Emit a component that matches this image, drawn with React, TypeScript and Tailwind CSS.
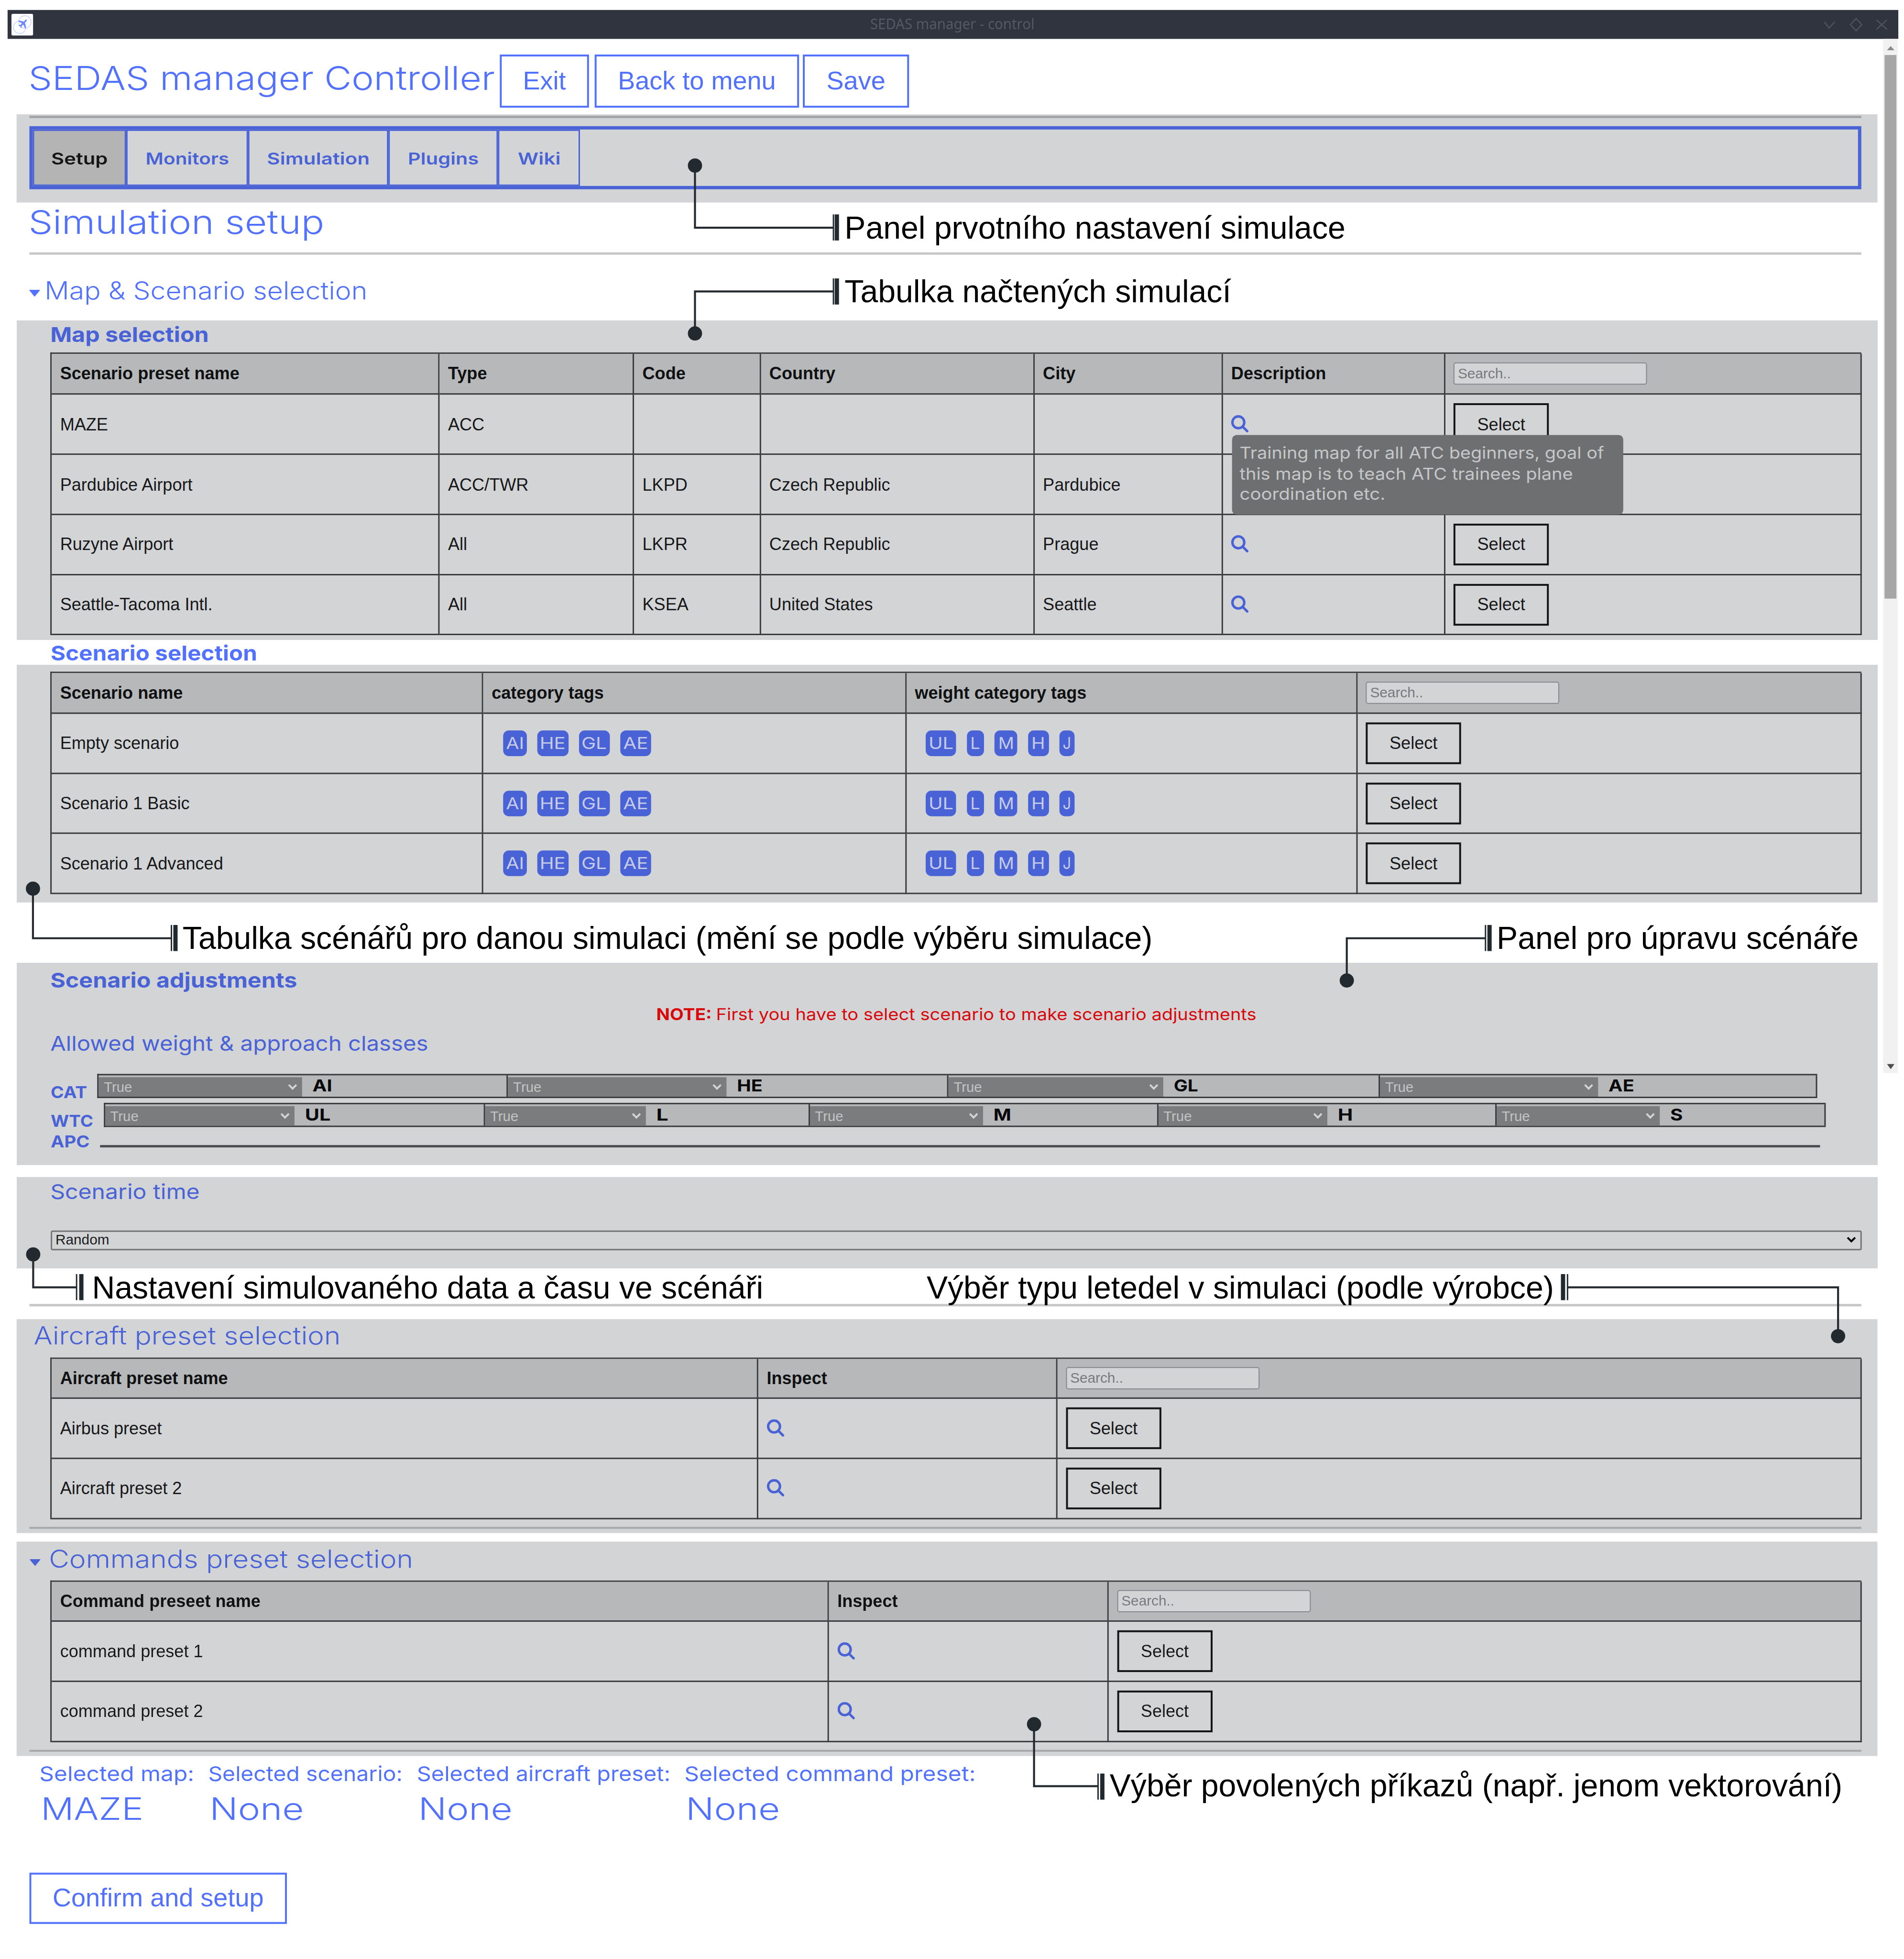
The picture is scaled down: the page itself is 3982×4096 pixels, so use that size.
import { useLayoutEffect, useRef, useState } from "react";
import type { ReactNode } from "react";

/** Text stretched horizontally so that it fills exactly `w` pixels. */
function Fit({ w, className = "", children }: { w: number; className?: string; children: ReactNode }) {
  const ref = useRef<HTMLSpanElement>(null);
  const [k, setK] = useState(1);
  useLayoutEffect(() => {
    const measure = () => {
      if (ref.current && ref.current.offsetWidth > 0) setK(w / ref.current.offsetWidth);
    };
    measure();
    document.fonts.ready.then(measure);
  }, [w]);
  return (
    <span className={`block shrink-0 whitespace-nowrap ${className}`} style={{ width: w }}>
      <span ref={ref} className="inline-block origin-left" style={{ transform: `scaleX(${k})` }}>
        {children}
      </span>
    </span>
  );
}

const h72 = "font-['Inter',sans-serif] text-[69.3px] leading-[72px] font-[350]";
const h67 = "font-['Inter',sans-serif] text-[65px] leading-[67px] font-[350]";
const h54 = "font-['Inter',sans-serif] text-[52px] leading-[54px] font-[350]";
const h45 = "font-['Inter',sans-serif] text-[43.3px] leading-[45px]";
const h36 = "font-['Inter',sans-serif] text-[34.7px] leading-[36px]";
const tip = "font-['Inter',sans-serif] text-[34.7px] leading-[43.5px]";

function OutlineButton({ className, children }: { className: string; children: ReactNode }) {
  return (
    <button
      className={`flex shrink-0 items-center justify-center border-[4px] border-[#5271ff] text-[54.5px] leading-[62px] text-[#5271ff] ${className}`}
    >
      {children}
    </button>
  );
}

function SelectButton() {
  return (
    <button className="h-[88px] w-[201px] border-[4px] border-[#141516] text-[36.4px] leading-[41px] text-[#17181a]">
      Select
    </button>
  );
}

function SearchBox() {
  return (
    <div className="flex h-[47px] w-[408px] items-center rounded-[5px] border-2 border-[#85878a] bg-[#d3d4d6] pl-[7px] text-[30px] font-normal leading-[34px] text-[#78797c]">
      Search..
    </div>
  );
}

function Magnifier() {
  return (
    <svg viewBox="0 0 37 37" className="mb-[2px] size-[37px]" fill="none" stroke="#4962d6" strokeWidth="5.2">
      <circle cx="15.3" cy="15.3" r="12.5" />
      <path d="M24.300 24.300l9.700 9.700" strokeLinecap="round" />
    </svg>
  );
}

function Caret({ className }: { className: string }) {
  return (
    <svg viewBox="0 0 24 16" className={`h-[16px] w-[24px] ${className}`}>
      <path d="M2 1h20L12 13z" fill="currentColor" stroke="currentColor" strokeWidth="2" strokeLinejoin="round" />
    </svg>
  );
}

function Chevron({ className }: { className: string }) {
  return (
    <svg viewBox="0 0 20 14" className={`h-[14px] w-[20px] ${className}`} fill="none" stroke="currentColor" strokeWidth="4">
      <path d="M2 2l8 8 8-8" />
    </svg>
  );
}

function Rule({ className }: { className: string }) {
  return <div className={`ml-[62px] w-[3863px] ${className}`} />;
}

function Panel({ className, children }: { className: string; children: ReactNode }) {
  return <section className={`relative ml-[34.5px] w-[3924px] bg-[#d3d4d6] ${className}`}>{children}</section>;
}

type TableProps = { cols: string; head: ReactNode[]; headHeight: string; rows: ReactNode[][] };

function DataTable({ cols, head, headHeight, rows }: TableProps) {
  return (
    <div className="ml-[71.7px] w-[3819px] border-l-3 border-t-3 border-[#3a3b3d] text-[36.4px] leading-[41px] text-[#17181a]">
      <div className={`grid ${cols} ${headHeight}`}>
        {head.map((cell, i) => (
          <div
            key={i}
            className="flex items-center border-b-3 border-r-3 border-[#3a3b3d] bg-[#b7b8ba] pl-[17.5px] font-bold text-[#101112]"
          >
            {cell}
          </div>
        ))}
      </div>
      {rows.map((row, r) => (
        <div key={r} className={`grid h-[126.75px] ${cols}`}>
          {row.map((cell, i) => (
            <div key={i} className="flex items-center border-b-3 border-r-3 border-[#3a3b3d] pl-[17.5px]">
              {cell}
            </div>
          ))}
        </div>
      ))}
    </div>
  );
}

function Tag({ className, text, w }: { className: string; text: string; w: number }) {
  return (
    <span className={`flex h-[54px] items-center justify-center rounded-[12px] bg-[#4962d6] text-[#c5cbe6] ${className}`}>
      <Fit w={w} className={`mb-[2px] ${h36}`}>{text}</Fit>
    </span>
  );
}

function CategoryTags() {
  return (
    <div className="flex gap-[22px] pl-[24px]">
      <Tag className="w-[50px]" text="AI" w={38} />
      <Tag className="w-[66px]" text="HE" w={55} />
      <Tag className="w-[65px]" text="GL" w={54} />
      <Tag className="w-[65px]" text="AE" w={53} />
    </div>
  );
}

function WeightTags() {
  return (
    <div className="flex gap-[22.5px] pl-[23px]">
      <Tag className="w-[64px]" text="UL" w={52} />
      <Tag className="w-[36px]" text="L" w={21} />
      <Tag className="w-[48px]" text="M" w={33} />
      <Tag className="w-[44px]" text="H" w={29} />
      <Tag className="w-[32px]" text="J" w={18} />
    </div>
  );
}

function Tab({ label, w, className, active = false }: { label: string; w: number; className: string; active?: boolean }) {
  return (
    <div
      className={`flex items-center justify-center border-[3px] border-[#4962d6] pt-[4px] font-semibold ${
        active ? "bg-[#b5b4b5] text-[#151515]" : "text-[#4962d6]"
      } ${className}`}
    >
      <Fit w={w} className={h36}>{label}</Fit>
    </div>
  );
}

function ClassCell({ label, w, select, className }: { label: string; w: number; select: string; className: string }) {
  return (
    <div className={`flex h-full border-r-3 border-[#3a3b3d] ${className}`}>
      <div className={`mt-[4px] flex items-center justify-between bg-[#7b7c7e] pl-[11px] pr-[10px] text-[29.5px] leading-[34px] text-[#c3c4c5] ${select}`}>
        True
        <Chevron className="text-[#d3d4d6]" />
      </div>
      <Fit w={w} className={`ml-[22px] mt-[3px] font-bold text-[#08090a] ${h36}`}>{label}</Fit>
    </div>
  );
}

function TitleBar() {
  return (
    <div className="ml-[15.5px] mt-[21px] flex h-[61px] w-[3987px] items-center bg-[#30343f]">
      <svg viewBox="0 0 46 46" className="ml-[8.5px] size-[46px]" fill="none">
        <rect width="46" height="46" rx="4" fill="#fdfdff" />
        <circle cx="17.5" cy="28.5" r="13.2" stroke="#d3dbff" strokeWidth="2" />
        <circle cx="28.5" cy="17.5" r="13.2" stroke="#d3dbff" strokeWidth="2" />
        <path
          d="M32 12.5c1.400 1.200.4 2.600-.8 3.800l-2.700 2.700 2.300 11-1.800 1-4-8.200-3.600 3.400.3 3-1.400 1.300-1.700-4-4-1.700 1.300-1.400 3 .3 3.300-3.500-7.700-4.400 1.200-1.600 10.300 2.400 2.700-2.700c1.200-1.200 2.200-2.200 3.300-1.400z"
          fill="#6f88ff"
        />
      </svg>
      <Fit w={346} className="ml-[1765px] mb-[3px] font-['Noto_Sans',sans-serif] text-[31px] leading-[36px] text-[#555965]">
        SEDAS manager - control
      </Fit>
      <svg viewBox="0 0 140 32" className="ml-[1664px] h-[32px] w-[140px]" fill="none" stroke="#4f535f" strokeWidth="2.500">
        <path d="M2 10l10 13 12-13" />
        <path d="M69 3l12 13-12 13-12-13z" />
        <path d="M112 6l22 20M134 6l-22 20" />
      </svg>
    </div>
  );
}

function ScrollBar() {
  return (
    <div className="absolute left-[3971px] top-[82px] flex h-[2180px] w-[31px] flex-col items-center bg-[#f1f1f1]">
      <svg viewBox="0 0 16 9" className="mt-[15px] h-[9px] w-[16px]">
        <path d="M8 0l8 9H0z" fill="#8a8a8a" />
      </svg>
      <div className="mt-[10px] h-[1146px] w-[25px] bg-[#a6a6a6]" />
      <svg viewBox="0 0 16 11" className="mb-[8px] mt-auto h-[11px] w-[16px]">
        <path d="M0 0h16L8 11z" fill="#4d4d4d" />
      </svg>
    </div>
  );
}

const leaders = [
  { dot: [1465.5, 349], path: "M1465.500 349V480H1757", thin: 1757.5, thick: 1764.7, y: 452, h: 55 },
  { dot: [1465.5, 703], path: "M1465.500 703V614.500H1757", thin: 1757.5, thick: 1764.7, y: 587, h: 55 },
  { dot: [69.5, 1873.5], path: "M69.500 1873.500V1978H362", thin: 361.5, thick: 370, y: 1950, h: 55 },
  { dot: [2840, 2067], path: "M2840 2067V1978H3133", thin: 3132.5, thick: 3141, y: 1950, h: 55 },
  { dot: [70, 2644.5], path: "M70 2644.500V2714H161", thin: 161.5, thick: 171.5, y: 2686, h: 55 },
  { dot: [3876, 2817], path: "M3876 2817V2714H3305", thin: 3305.5, thick: 3296, y: 2686, h: 55 },
  { dot: [2180.5, 3635], path: "M2180.500 3635V3765.500H2316", thin: 2315.5, thick: 2324.5, y: 3739, h: 55 },
];

const notes = [
  { text: "Panel prvotního nastavení simulace", place: "left-[1781px] top-[447px]" },
  { text: "Tabulka načtených simulací", place: "left-[1781px] top-[581px]" },
  { text: "Tabulka scénářů pro danou simulaci (mění se podle výběru simulace)", place: "left-[385px] top-[1944px]" },
  { text: "Panel pro úpravu scénáře", place: "left-[3156px] top-[1944px]" },
  { text: "Nastavení simulovaného data a času ve scénáři", place: "left-[194px] top-[2681px]" },
  { text: "Výběr typu letedel v simulaci (podle výrobce)", place: "left-[1954px] top-[2681px]" },
  { text: "Výběr povolených příkazů (např. jenom vektorování)", place: "left-[2340px] top-[3731px]" },
];

function Annotations() {
  return (
    <>
      <svg viewBox="0 0 4015 4130" className="absolute left-0 top-0 h-[4130px] w-[4015px]" fill="none" stroke="#232a2f">
        {leaders.map((l, i) => (
          <g key={i}>
            <circle cx={l.dot[0]} cy={l.dot[1]} r="15" fill="#232a2f" stroke="none" />
            <path d={l.path} strokeWidth="4.200" />
            <path d={`M${l.thin} ${l.y}v${l.h}`} strokeWidth="3" />
            <path d={`M${l.thick} ${l.y}v${l.h}`} strokeWidth="9" />
          </g>
        ))}
      </svg>
      {notes.map((n) => (
        <div key={n.text} className={`absolute whitespace-nowrap text-[66.67px] leading-[66px] text-black ${n.place}`}>
          {n.text}
        </div>
      ))}
    </>
  );
}

function Selection({ label, w, value, vw, className }: { label: string; w: number; value: string; vw: number; className: string }) {
  return (
    <div className={`shrink-0 ${className}`}>
      <Fit w={w} className={h45}>{label}</Fit>
      <Fit w={vw} className={`ml-[3px] mt-[18px] ${h67}`}>{value}</Fit>
    </div>
  );
}

export default function App() {
  return (
    <div className="h-[4096px] w-[3982px] overflow-hidden bg-white">
      <div className="relative flex h-[4130px] w-[4015px] origin-top-left scale-[0.99178] flex-col font-['Liberation_Sans',Arial,sans-serif] *:shrink-0">
        <TitleBar />

        <header className="flex h-[159px] items-start pl-[60px] text-[#5271ff]">
          <Fit w={984} className={`mt-[47px] ${h72}`}>SEDAS manager Controller</Fit>
          <OutlineButton className="ml-[10px] mt-[33px] h-[112px] w-[188px]">Exit</OutlineButton>
          <OutlineButton className="ml-[12px] mt-[33px] h-[112px] w-[431px]">Back to menu</OutlineButton>
          <OutlineButton className="ml-[8px] mt-[33px] h-[112px] w-[224px]">Save</OutlineButton>
        </header>

        <Panel className="h-[186px]">
          <div className="ml-[27.5px] w-[3863px] pt-[3px]">
            <div className="h-[5px] bg-[#a3a4a6]" />
            <nav className="mt-[16.5px] flex h-[133.5px] border-[7px] border-[#4962d6]">
              <Tab active label="Setup" w={119} className="w-[197px]" />
              <Tab label="Monitors" w={176} className="w-[257px]" />
              <Tab label="Simulation" w={217} className="w-[296px]" />
              <Tab label="Plugins" w={150} className="w-[231px]" />
              <Tab label="Wiki" w={90} className="w-[173px]" />
            </nav>
          </div>
        </Panel>

        <div className="h-[248.5px] text-[#5271ff]">
          <Fit w={624} className={`ml-[60px] mt-[5px] ${h72}`}>Simulation setup</Fit>
          <Rule className="mt-[28px] h-[5px] bg-[#c6c6c7]" />
          <div className="mt-[49px] flex items-start pl-[61px]">
            <Caret className="mt-[25px]" />
            <Fit w={681} className={`ml-[9px] ${h54}`}>Map &amp; Scenario selection</Fit>
          </div>
        </div>

        <Panel className="h-[673px]">
          <Fit w={334} className={`ml-[71px] pt-[7px] font-bold text-[#4962d6] ${h45}`}>Map selection</Fit>
          <div className="mt-[15.5px]">
            <DataTable
              cols="grid-cols-[818px_410px_267.5px_577px_397px_469px_878px]"
              headHeight="h-[86.4px]"
              head={["Scenario preset name", "Type", "Code", "Country", "City", "Description", <SearchBox />]}
              rows={[
                ["MAZE", "ACC", "", "", "", <Magnifier />, <SelectButton />],
                ["Pardubice Airport", "ACC/TWR", "LKPD", "Czech Republic", "Pardubice", "", ""],
                ["Ruzyne Airport", "All", "LKPR", "Czech Republic", "Prague", <Magnifier />, <SelectButton />],
                ["Seattle-Tacoma Intl.", "All", "KSEA", "United States", "Seattle", <Magnifier />, <SelectButton />],
              ]}
            />
          </div>
          <div className="absolute left-[2563px] top-[241px] h-[168px] w-[825px] rounded-[10px] bg-[#6d6f71] pl-[16px] pt-[16.5px] text-[#c6c7c8]">
            <Fit w={769} className={tip}>Training map for all ATC beginners, goal of</Fit>
            <Fit w={703} className={tip}>this map is to teach ATC trainees plane</Fit>
            <Fit w={307} className={tip}>coordination etc.</Fit>
          </div>
        </Panel>

        <div className="h-[53px]">
          <Fit w={435} className={`ml-[106.5px] mt-[5px] font-bold text-[#5271ff] ${h45}`}>Scenario selection</Fit>
        </div>

        <Panel className="h-[501px] pt-[14px]">
          <DataTable
            cols="grid-cols-[910px_892.5px_951px_1063px]"
            headHeight="h-[86.4px]"
            head={["Scenario name", "category tags", "weight category tags", <SearchBox />]}
            rows={[
              ["Empty scenario", <CategoryTags />, <WeightTags />, <SelectButton />],
              ["Scenario 1 Basic", <CategoryTags />, <WeightTags />, <SelectButton />],
              ["Scenario 1 Advanced", <CategoryTags />, <WeightTags />, <SelectButton />],
            ]}
          />
        </Panel>

        <Panel className="mt-[127.5px] h-[425.5px] pt-[14px] text-[#4962d6]">
          <Fit w={520} className={`ml-[71px] font-bold ${h45}`}>Scenario adjustments</Fit>
          <div className="ml-[1349px] mt-[31px] flex text-[#d8090d]">
            <Fit w={117} className={`font-bold ${h36}`}>NOTE:</Fit>
            <Fit w={1139} className={`ml-[9px] ${h36}`}>First you have to select scenario to make scenario adjustments</Fit>
          </div>
          <Fit w={797} className={`ml-[71px] mt-[21px] ${h45}`}>Allowed weight &amp; approach classes</Fit>
          <div className="ml-[72px] mt-[42px] flex h-[51px]">
            <Fit w={77} className={`mt-[20px] font-bold ${h36}`}>CAT</Fit>
            <div className="ml-[21.500px] flex h-[51px] w-[3627px] border-y-3 border-l-3 border-[#3a3b3d] bg-[#b7b8ba]">
              <ClassCell label="AI" w={42} select="w-[429px]" className="w-[863px]" />
              <ClassCell label="HE" w={54} select="w-[461px]" className="w-[929px]" />
              <ClassCell label="GL" w={52} select="w-[453px]" className="w-[910px]" />
              <ClassCell label="AE" w={54} select="w-[460px]" className="w-[922px]" />
            </div>
          </div>
          <div className="ml-[72px] mt-[10px] flex h-[51px]">
            <Fit w={90} className={`mt-[20px] font-bold ${h36}`}>WTC</Fit>
            <div className="ml-[22px] flex h-[51px] w-[3631px] border-y-3 border-l-3 border-[#3a3b3d] bg-[#b7b8ba]">
              <ClassCell label="UL" w={54} select="w-[399px]" className="w-[801px]" />
              <ClassCell label="L" w={26} select="w-[339px]" className="w-[685px]" />
              <ClassCell label="M" w={37} select="w-[365px]" className="w-[735px]" />
              <ClassCell label="H" w={32} select="w-[356px]" className="w-[713px]" />
              <ClassCell label="S" w={27} select="w-[344px]" className="w-[694px]" />
            </div>
          </div>
          <div className="ml-[72px] mt-[12px] flex">
            <Fit w={82} className={`font-bold ${h36}`}>APC</Fit>
            <div className="ml-[22px] mt-[26px] h-[5px] w-[3627px] bg-[#4a4c4e]" />
          </div>
        </Panel>

        <Panel className="mt-[25.5px] h-[191.5px] pt-[9px] text-[#4962d6]">
          <Fit w={315} className={`ml-[71px] ${h45}`}>Scenario time</Fit>
          <div className="ml-[72.5px] mt-[59px] flex h-[42px] w-[3819px] items-center justify-between rounded-[4px] border-[3px] border-[#737476] pb-[2px] pl-[7px] pr-[9px] text-[30px] leading-[34px] text-[#1c1d1f]">
            Random
            <Chevron className="text-black" />
          </div>
        </Panel>

        <div className="h-[108.5px] pt-[76.5px]">
          <Rule className="h-[5px] bg-[#c6c6c7]" />
        </div>

        <Panel className="h-[451px] pt-[8px]">
          <Fit w={647} className={`ml-[36px] text-[#4962d6] ${h54}`}>Aircraft preset selection</Fit>
          <div className="mt-[18.5px]">
            <DataTable
              cols="grid-cols-[1490px_631px_1695.5px]"
              headHeight="h-[84.7px]"
              head={["Aircraft preset name", "Inspect", <SearchBox />]}
              rows={[
                ["Airbus preset", <Magnifier />, <SelectButton />],
                ["Aircraft preset 2", <Magnifier />, <SelectButton />],
              ]}
            />
          </div>
          <div className="ml-[27.5px] mt-[16px] h-[4px] w-[3863px] bg-[#a6a7a9]" />
        </Panel>

        <Panel className="mt-[17.5px] h-[452.5px] pt-[10px]">
          <div className="flex items-start pl-[27px] text-[#4962d6]">
            <Caret className="mt-[27px]" />
            <Fit w={768} className={`ml-[17px] ${h54}`}>Commands preset selection</Fit>
          </div>
          <div className="mt-[18px]">
            <DataTable
              cols="grid-cols-[1639px_590px_1587.5px]"
              headHeight="h-[84.7px]"
              head={["Command preseet name", "Inspect", <SearchBox />]}
              rows={[
                ["command preset 1", <Magnifier />, <SelectButton />],
                ["command preset 2", <Magnifier />, <SelectButton />],
              ]}
            />
          </div>
          <div className="ml-[27.5px] mt-[16px] h-[4px] w-[3863px] bg-[#a6a7a9]" />
        </Panel>

        <div className="flex pl-[83px] pt-[15px] text-[#5271ff]">
          <Selection label="Selected map:" w={326} value="MAZE" vw={216} className="w-[356px]" />
          <Selection label="Selected scenario:" w={410} value="None" vw={199} className="w-[440px]" />
          <Selection label="Selected aircraft preset:" w={535} value="None" vw={199} className="w-[564px]" />
          <Selection label="Selected command preset:" w={614} value="None" vw={199} className="w-[620px]" />
        </div>

        <OutlineButton className="ml-[62px] mt-[101px] h-[108px] w-[543px] pb-[2px]">Confirm and setup</OutlineButton>

        <ScrollBar />
        <Annotations />
      </div>
    </div>
  );
}
